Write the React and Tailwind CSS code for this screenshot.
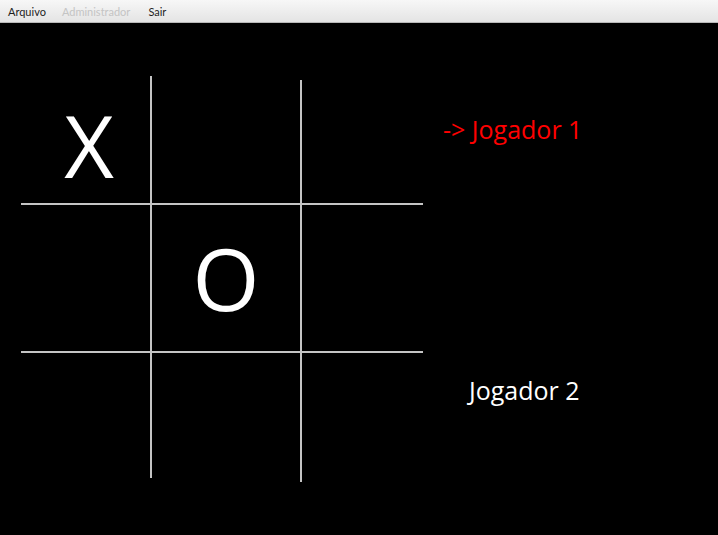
import React from 'react';

const board = [
  ['X', '', ''],
  ['', 'O', ''],
  ['', '', ''],
];

function MenuBar() {
  return (
    <div
      className="h-[23px] flex items-center bg-gradient-to-b from-[#f7f7f7] to-[#e4e4e4] border-b border-[#b9b9b9] text-[11px] leading-none"
      style={{ fontFamily: 'Lato, "Open Sans", sans-serif' }}
    >
      <span className="ml-[8px] text-[#1e1e1e]">Arquivo</span>
      <span className="ml-[16px] text-[#c4c4c4]">Administrador</span>
      <span className="ml-[18px] text-[#1e1e1e]">Sair</span>
    </div>
  );
}

function Board() {
  return (
    <div className="relative w-[440px] h-[480px] shrink-0">
      {/* grid lines */}
      <svg width="440" height="480" className="absolute inset-0">
        <g stroke="#c4c4c4" strokeWidth="2">
          <line x1="151" y1="53" x2="151" y2="455" />
          <line x1="301" y1="57" x2="301" y2="459" />
          <line x1="21" y1="181" x2="423" y2="181" />
          <line x1="21" y1="329" x2="423" y2="329" />
        </g>
      </svg>
      {/* marks */}
      <div className="absolute left-[21px] top-[53px] grid grid-cols-[130px_150px_122px] grid-rows-[128px_148px_130px]">
        {board.flat().map((v, i) => (
          <div
            key={i}
            className={`flex items-center justify-center text-white text-[86px] leading-none ${i === 0 ? 'pl-[6px] pt-[10px]' : ''}`}
          >
            {v}
          </div>
        ))}
      </div>
    </div>
  );
}

export default function App() {
  return (
    <div className="w-[718px] h-[535px] bg-black overflow-hidden" style={{ fontFamily: '"Open Sans", "Noto Sans", sans-serif' }}>
      <MenuBar />
      <div className="flex">
        <Board />
        <div className="flex flex-col text-[25px] leading-[32px]">
          <div className="pt-[90px] pl-[3px] text-[#ff0000]">-&gt; Jogador 1</div>
          <div className="pt-[229px] pl-[29px] text-white">Jogador 2</div>
        </div>
      </div>
    </div>
  );
}
